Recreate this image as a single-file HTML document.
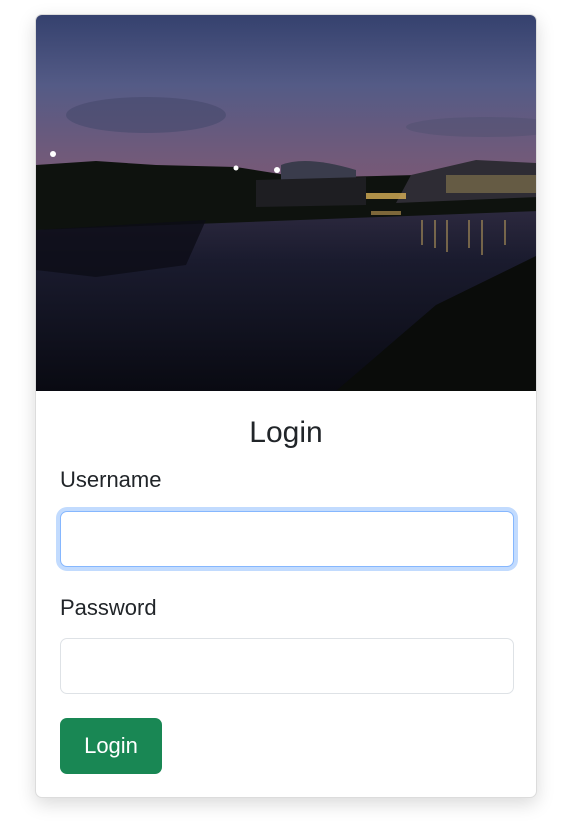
<!DOCTYPE html>
<html><head><meta charset="utf-8"><style>
*{box-sizing:border-box}
body{margin:0;background:#fff;font-family:"Segoe UI","Liberation Sans",sans-serif;color:#212529;width:563px;height:835px;overflow:hidden}
.card{position:absolute;left:35px;top:14px;width:502px;height:784px;border:1px solid #dcdcdc;border-radius:7px;box-shadow:0 6px 18px rgba(0,0,0,.15);overflow:hidden;background:#fff}
.img{position:absolute;left:0;top:0;width:502px;height:376px;display:block}
h1{position:absolute;left:0;width:100%;top:398px;margin:0;text-align:center;font-weight:400;font-size:30px;line-height:40px}
.lbl{position:absolute;left:24px;font-size:22px;line-height:30px}
.in{position:absolute;left:24px;width:454px;height:56px;border:1px solid #dee2e6;border-radius:7px;background:#fff}
.focus{border-color:#86b7fe;box-shadow:0 0 0 4px #c2dbfe}
.btn{position:absolute;left:24px;top:703px;width:102px;height:56px;background:#198754;border-radius:7px;color:#fff;font-size:22px;line-height:56px;text-align:center}
</style></head><body>
<div class="card">
<svg class="img" viewBox="0 0 502 376" xmlns="http://www.w3.org/2000/svg">
<defs>
<linearGradient id="sky" x1="0" y1="0" x2="0" y2="1">
<stop offset="0" stop-color="#35416e"/><stop offset="0.35" stop-color="#545b86"/><stop offset="0.7" stop-color="#705a7a"/><stop offset="1" stop-color="#835670"/>
</linearGradient>
<linearGradient id="wat" x1="0" y1="0" x2="0" y2="1">
<stop offset="0" stop-color="#2e2a40"/><stop offset="0.3" stop-color="#1a1b2e"/><stop offset="1" stop-color="#090a12"/>
</linearGradient>
</defs>
<rect width="502" height="200" fill="url(#sky)"/>
<ellipse cx="110" cy="100" rx="80" ry="18" fill="#464a6c" opacity=".6"/>
<ellipse cx="450" cy="112" rx="80" ry="10" fill="#4f4f70" opacity=".5"/>
<rect y="190" width="502" height="186" fill="url(#wat)"/>
<path d="M0 150 L60 146 L120 150 L200 152 L250 160 L300 162 L380 160 L502 168 L502 196 L0 215Z" fill="#0e120e"/>
<path d="M0 215 L170 205 L150 250 L60 262 L0 255Z" fill="#0c0d16" opacity=".8"/>
<path d="M245 150 Q270 140 320 155 L320 172 L245 175Z" fill="#3a3c4c"/>
<path d="M220 165 L330 162 L330 190 L220 192Z" fill="#1e1e22"/>
<path d="M375 160 L440 145 L500 148 L502 182 L360 188Z" fill="#2e2c34"/>
<rect x="410" y="160" width="90" height="18" fill="#8a7c50" opacity=".6"/>
<rect x="330" y="178" width="40" height="6" fill="#d8b058" opacity=".8"/>
<rect x="335" y="196" width="30" height="4" fill="#c8a058" opacity=".6"/>
<g fill="#c8a860" opacity=".5"><rect x="385" y="205" width="2" height="25"/><rect x="398" y="205" width="2" height="28"/><rect x="410" y="205" width="2" height="32"/><rect x="432" y="205" width="2" height="28"/><rect x="445" y="205" width="2" height="35"/><rect x="468" y="205" width="2" height="25"/></g>
<circle cx="17" cy="139" r="3" fill="#fff"/><circle cx="200" cy="153" r="2.5" fill="#fff"/><circle cx="241" cy="155" r="3" fill="#fff"/>
<path d="M400 290 L502 240 L502 376 L300 376Z" fill="#0a0c0a"/>
</svg>
<h1>Login</h1>
<div class="lbl" style="top:450px">Username</div>
<div class="in focus" style="top:496px"></div>
<div class="lbl" style="top:578px">Password</div>
<div class="in" style="top:623px"></div>
<div class="btn">Login</div>
</div>
</body></html>
